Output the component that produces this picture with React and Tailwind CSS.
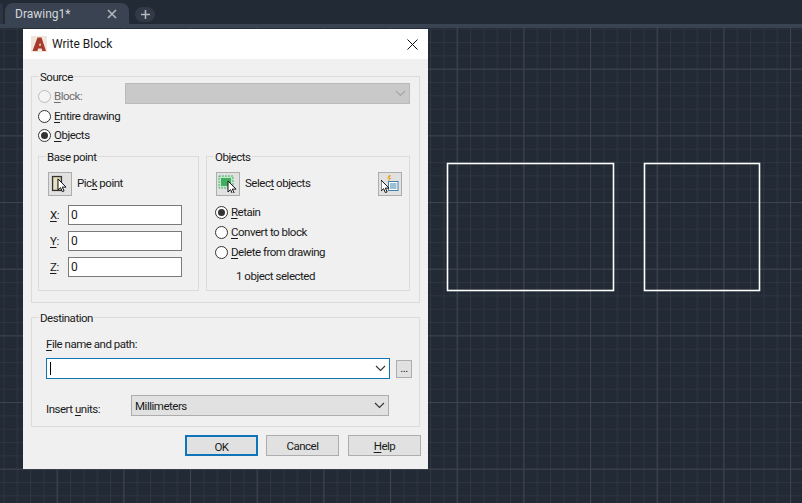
import React from 'react';

const Chevron = ({ color = '#333333' }) => (
    <svg width="11" height="7" viewBox="0 0 11 7" fill="none">
        <path d="M1 1l4.5 4.5L10 1" stroke={color} strokeWidth="1.1" />
    </svg>
);

const Cursor = ({ x, y }) => (
    <path
        transform={`translate(${x} ${y})`}
        d="M0 0v11l2.6-2.3 1.8 4 1.7-.8-1.8-3.8H8z"
        fill="#ffffff"
        stroke="#111111"
        strokeWidth="1"
    />
);

const PickIcon = () => (
    <svg width="18" height="18" viewBox="0 0 18 18">
        <rect x="1.5" y="1.5" width="9" height="14" fill="#cfc6a0" stroke="#333333" strokeWidth="1.2" />
        <rect x="3" y="3" width="3" height="11" fill="#e6e0c4" />
        <Cursor x={7} y={4} />
    </svg>
);

const SelectIcon = () => (
    <svg width="20" height="18" viewBox="0 0 20 18">
        <rect x="1" y="1" width="14" height="12" fill="#c6e6cc" />
        <rect x="3" y="3" width="10" height="8" fill="#3fae5f" />
        <rect x="1" y="1" width="14" height="12" fill="none" stroke="#44b266" strokeWidth="1" strokeDasharray="2 1" />
        <Cursor x={10} y={6} />
    </svg>
);

const QuickSelectIcon = () => (
    <svg width="18" height="18" viewBox="0 0 18 18">
        <path d="M8 0l-2 3.5h2L6.5 7 10.5 3H8.5L10 0z" fill="#eda531" />
        <rect x="7.5" y="6.5" width="9.5" height="9" fill="#ffffff" stroke="#3f7fa8" strokeWidth="1" />
        <path d="M9 9h6.5M9 11h6.5M9 13h6.5" stroke="#3f7fa8" strokeWidth="1" />
        <Cursor x={0} y={5} />
    </svg>
);

const AcadLogo = () => (
    <svg width="16" height="16" viewBox="0 0 16 16">
        <rect width="16" height="16" fill="#efe6dc" />
        <path d="M1.5 15L6.5 1.5h4L15 15h-3.6l-.8-2.6H7.2L6.3 15zM8 9.8h2L9.1 6.4z" fill="#a63a2b" />
    </svg>
);

// one underlined access key inside a label
const Key = ({ children }) => <span className="underline underline-offset-2">{children}</span>;

const Radio = ({ checked, disabled, children }) => (
    <div className="flex items-center h-5 gap-[3px]">
        <span className={`flex items-center justify-center w-[13px] h-[13px] rounded-full border ${disabled ? 'border-[#bcbcbc] bg-[#f4f4f4]' : 'border-[#333333] bg-white'}`}>
            {checked && <span className="w-[7px] h-[7px] rounded-full bg-[#333333]" />}
        </span>
        <span className={disabled ? 'mt-[2px] text-[#6d6d6d]' : 'mt-[2px]'}>{children}</span>
    </div>
);

const Group = ({ title, className, children }) => (
    <div className={`relative border border-[#dcdcdc] ${className}`}>
        <span className="absolute left-[7px] -top-[8px] bg-[#f0f0f0] px-[1px] leading-4">{title}</span>
        {children}
    </div>
);

const IconButton = ({ children }) => (
    <button className="flex items-center justify-center w-6 h-6 bg-[#e1e1e1] border border-[#adadad]">{children}</button>
);

const CoordField = ({ label }) => (
    <div className="flex items-center h-5">
        <span className="w-5 pl-[2px] mt-[2px]"><Key>{label}</Key>:</span>
        <div className="flex items-center w-[114px] h-5 bg-white border border-[#7a7a7a] pl-[2px] text-[12px]">0</div>
    </div>
);

const DialogButton = ({ primary, className, children }) => (
    <button className={`w-[73px] h-[21px] pt-[2px] bg-[#e1e1e1] border ${primary ? 'border-2 border-[#0f74b8]' : 'border-[#adadad]'} ${className}`}>
        {children}
    </button>
);

const Canvas = () => (
    <svg className="absolute inset-0 w-full h-full">
        <defs>
            <pattern id="minor" patternUnits="userSpaceOnUse" x="3.4" y="0.7" width="13.333" height="13.333">
                <path d="M0.5 0V13.333M0 0.5H13.333" stroke="#2e3541" strokeWidth="1" fill="none" />
            </pattern>
            <pattern id="major" patternUnits="userSpaceOnUse" x="56.7" y="40.7" width="66.667" height="66.667">
                <path d="M0.5 0V66.667M0 0.5H66.667" stroke="#3d4450" strokeWidth="1" fill="none" />
            </pattern>
        </defs>
        <rect width="802" height="475" fill="url(#minor)" />
        <rect width="802" height="475" fill="url(#major)" />
        <rect x="447.5" y="135.5" width="166" height="127" fill="none" stroke="#ffffff" strokeWidth="1.6" />
        <rect x="644.5" y="135.5" width="115" height="127" fill="none" stroke="#ffffff" strokeWidth="1.6" />
    </svg>
);

const App = () => {
    return (
        <div className="relative flex flex-col w-screen h-screen overflow-hidden bg-[#222a35] font-['Roboto',sans-serif] text-[11.5px] tracking-[-0.48px] text-[#1a1a1a]">
            {/* tab bar */}
            <div className="flex items-end h-6 shrink-0 bg-[#222a35]">
                <div className="w-[3px] h-[21px] bg-[#2d3543] rounded-tr-md" />
                <div className="flex items-center justify-between w-[124px] h-[21px] ml-[2px] pl-[10px] pr-3 bg-[#3a4352] rounded-t-lg text-[#d4d7db] text-[12px] tracking-normal">
                    <span>Drawing1*</span>
                    <svg width="10" height="10" viewBox="0 0 10 10">
                        <path d="M1 1l8 8M9 1l-8 8" stroke="#b4b8bd" strokeWidth="1.6" />
                    </svg>
                </div>
                <div className="flex items-center justify-center w-[20px] h-[15px] ml-[6px] mb-[2px] bg-[#323a48] rounded-full">
                    <svg width="9" height="9" viewBox="0 0 9 9">
                        <path d="M4.5 0v9M0 4.5h9" stroke="#b4b8bd" strokeWidth="1.6" />
                    </svg>
                </div>
            </div>
            <div className="h-1 shrink-0 bg-[#3a4352]" />
            <div className="relative flex-1">
                <Canvas />
            </div>

            {/* Write Block dialog */}
            <div className="absolute left-[23px] top-[29px] flex flex-col w-[405px] h-[440px] bg-[#f0f0f0]">
                <div className="flex items-center justify-between h-[30px] shrink-0 bg-white pl-2 pr-[10px] text-[12px] tracking-normal">
                    <div className="flex items-center gap-[5px]">
                        <AcadLogo />
                        <span>Write Block</span>
                    </div>
                    <svg width="11" height="11" viewBox="0 0 11 11">
                        <path d="M0.5 0.5l10 10M10.5 0.5l-10 10" stroke="#111111" strokeWidth="1" />
                    </svg>
                </div>

                <div className="flex-1 px-2 pt-[17px]">
                    <Group title="Source" className="h-[227px] pt-[6px] pl-[6px]">
                        <div className="flex items-start h-[23px]">
                            <div className="w-[87px] mt-[3px]">
                                <Radio disabled><Key>B</Key>lock:</Radio>
                            </div>
                            <div className="flex items-center justify-end w-[285px] h-[21px] pr-[3px] bg-[#c9c9c9] border border-[#bababa]">
                                <Chevron color="#a6a6a6" />
                            </div>
                        </div>
                        <Radio><Key>E</Key>ntire drawing</Radio>
                        <div className="-mt-[1px]">
                            <Radio checked><Key>O</Key>bjects</Radio>
                        </div>

                        <div className="flex gap-[7px] mt-[11px]">
                            <Group title="Base point" className="w-[161px] h-[135px] pt-[15px] pl-[9px]">
                                <div className="flex items-center gap-[5px]">
                                    <IconButton><PickIcon /></IconButton>
                                    <span>Pic<Key>k</Key> point</span>
                                </div>
                                <div className="flex flex-col gap-[6px] mt-[9px]">
                                    <CoordField label="X" />
                                    <CoordField label="Y" />
                                    <CoordField label="Z" />
                                </div>
                            </Group>
                            <Group title="Objects" className="w-[204px] h-[135px] pt-[15px] pl-[9px] pr-[7px]">
                                <div className="flex items-center">
                                    <IconButton><SelectIcon /></IconButton>
                                    <span className="ml-[5px]">Selec<Key>t</Key> objects</span>
                                    <div className="ml-auto">
                                        <IconButton><QuickSelectIcon /></IconButton>
                                    </div>
                                </div>
                                <div className="-ml-[1px] mt-[6px]">
                                    <Radio checked><Key>R</Key>etain</Radio>
                                    <Radio><Key>C</Key>onvert to block</Radio>
                                    <Radio><Key>D</Key>elete from drawing</Radio>
                                </div>
                                <div className="h-4 mt-[6px] pl-[20px] leading-4">1 object selected</div>
                            </Group>
                        </div>
                    </Group>

                    <Group title="Destination" className="h-[110px] mt-[14px] pt-[18px] pl-[14px]">
                        <div className="h-4 leading-4"><Key>F</Key>ile name and path:</div>
                        <div className="flex items-center mt-[6px]">
                            <div className="flex items-center justify-between w-[344px] h-[21px] bg-white border border-[#1274b5] pl-[3px] pr-[3px]">
                                <span className="w-[1px] h-[13px] bg-black" />
                                <Chevron />
                            </div>
                            <button className="flex items-center justify-center w-4 h-[18px] ml-[6px] bg-[#e1e1e1] border border-[#adadad] leading-none">...</button>
                        </div>
                        <div className="flex items-start mt-[16px]">
                            <span className="w-[85px] mt-[6px] leading-4">Insert <Key>u</Key>nits:</span>
                            <div className="flex items-center justify-between w-[258px] h-[21px] bg-[#e1e1e1] border border-[#adadad] pl-[3px] pr-[3px]">
                                <span className="mt-[2px]">Millimeters</span>
                                <Chevron />
                            </div>
                        </div>
                    </Group>

                    <div className="flex justify-end mt-[8px] -mr-[1px]">
                        <DialogButton primary>OK</DialogButton>
                        <DialogButton className="ml-2">Cancel</DialogButton>
                        <DialogButton className="ml-[9px]"><Key>H</Key>elp</DialogButton>
                    </div>
                </div>
            </div>
        </div>
    );
};

export default App;
